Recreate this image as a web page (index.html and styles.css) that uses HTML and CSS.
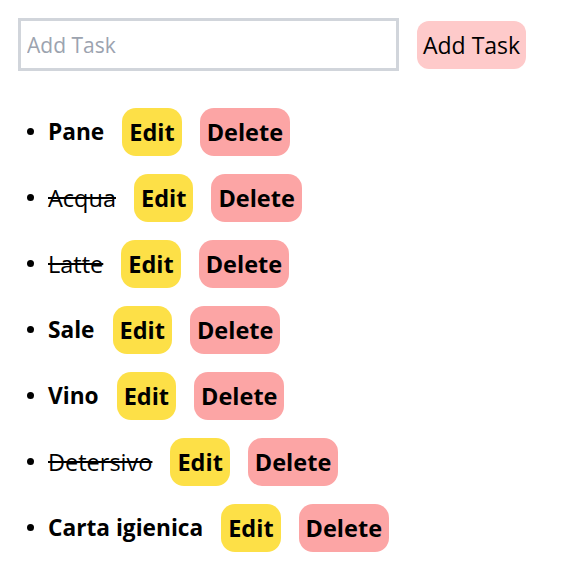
FILE: index.html
```html
<!DOCTYPE html>
<html lang="it">
<head>
<meta charset="utf-8">
<title>Todo</title>
<link rel="stylesheet" href="styles.css">
</head>
<body>
<div class="app">
  <form class="add-form">
    <input class="task-input" type="text" placeholder="Add Task">
    <button class="add-btn" type="button">Add Task</button>
  </form>
  <ul class="task-list">
    <li class="task"><span class="task-name">Pane</span><button class="btn edit">Edit</button><button class="btn delete">Delete</button></li>
    <li class="task done"><span class="task-name">Acqua</span><button class="btn edit">Edit</button><button class="btn delete">Delete</button></li>
    <li class="task done"><span class="task-name">Latte</span><button class="btn edit">Edit</button><button class="btn delete">Delete</button></li>
    <li class="task"><span class="task-name">Sale</span><button class="btn edit">Edit</button><button class="btn delete">Delete</button></li>
    <li class="task"><span class="task-name">Vino</span><button class="btn edit">Edit</button><button class="btn delete">Delete</button></li>
    <li class="task done"><span class="task-name">Detersivo</span><button class="btn edit">Edit</button><button class="btn delete">Delete</button></li>
    <li class="task"><span class="task-name">Carta igienica</span><button class="btn edit">Edit</button><button class="btn delete">Delete</button></li>
  </ul>
</div>
</body>
</html>
```
FILE: styles.css
```css
* { box-sizing: border-box; }
body {
  margin: 8px;
  font-family: "Open Sans", "Noto Sans", sans-serif;
  font-size: 24px;
  color: #000;
  background: #fff;
}
.add-form {
  display: flex;
  align-items: center;
  gap: 18px;
  margin: 10px 0 0 10px;
}
.task-input {
  width: 381px;
  height: 53px;
  border: 3px solid #d1d5db;
  padding: 0 6px;
  font-family: inherit;
  font-size: 21px;
  color: #000;
  outline: none;
}
.task-input::placeholder { color: #9ca3af; }
.add-btn {
  height: 48px;
  margin-top: 1px;
  padding: 0 6px;
  border: none;
  border-radius: 12px;
  background: #fecaca;
  font-family: inherit;
  font-size: 23px;
  color: #000;
}
.task-list {
  margin: 34px 0 0 0;
  padding-left: 40px;
  list-style: none;
}
.task {
  height: 48px;
  margin-bottom: 18px;
  line-height: 48px;
  white-space: nowrap;
}
.task::before {
  content: "";
  display: inline-block;
  width: 7px;
  height: 7px;
  margin-left: -21px;
  margin-right: 14px;
  border-radius: 50%;
  background: #000;
  vertical-align: middle;
}
.task-name {
  font-size: 22.7px;
  font-weight: 700;
  vertical-align: middle;
  line-height: 32px;
}
.task.done .task-name {
  font-size: 23.5px;
  font-weight: 400;
  text-decoration: line-through;
}
.btn {
  height: 48px;
  margin-left: 18px;
  padding: 0 7px;
  border: none;
  border-radius: 14px;
  font-family: inherit;
  font-size: 23.5px;
  font-weight: 700;
  color: #000;
  vertical-align: middle;
}
.edit { background: #fde047; }
.delete { background: #fca5a5; }
```
